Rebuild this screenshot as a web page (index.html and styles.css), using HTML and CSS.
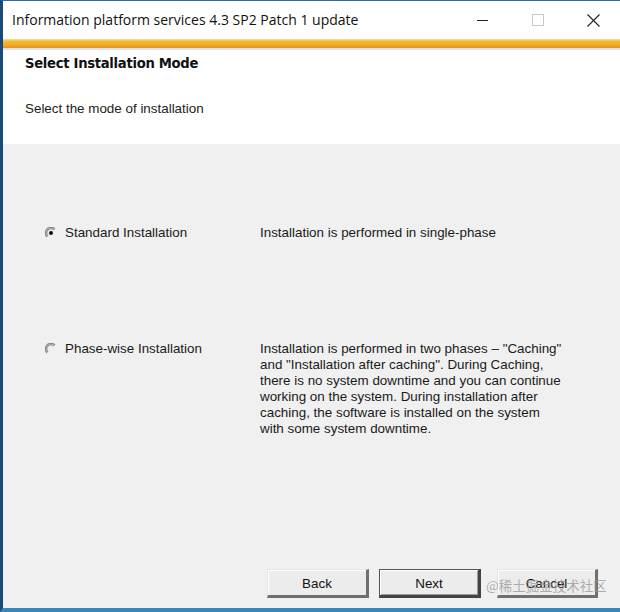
FILE: index.html
```html
<!DOCTYPE html>
<html>
<head>
<meta charset="utf-8">
<link rel="stylesheet" href="styles.css">
</head>
<body>
<div class="window">
  <div class="titlebar">
    <div class="title">Information platform services 4.3 SP2 Patch 1 update</div>
    <div class="controls">
      <span class="ctl ctl-min"><svg width="12" height="12" viewBox="0 0 12 12"><line x1="0" y1="6.5" x2="11" y2="6.5" stroke="#222" stroke-width="1"/></svg></span>
      <span class="ctl ctl-max"><svg width="12" height="12" viewBox="0 0 12 12"><rect x="0.5" y="0.5" width="11" height="11" fill="none" stroke="#c8c8c8" stroke-width="1"/></svg></span>
      <span class="ctl ctl-close"><svg width="13" height="13" viewBox="0 0 13 13"><path d="M0.5 0.5 L12.5 12.5 M12.5 0.5 L0.5 12.5" stroke="#222" stroke-width="1.1" fill="none"/></svg></span>
    </div>
  </div>
  <div class="accent"></div>
  <div class="header">
    <div class="h-title">Select Installation Mode</div>
    <div class="h-sub">Select the mode of installation</div>
  </div>
  <div class="content">
    <div class="options">
      <div class="option">
        <div class="opt-label">
          <span class="radio checked"><svg width="12" height="12" viewBox="0 0 12 12"><path d="M2 10 A5.5 5.5 0 0 1 10 2" stroke="#8a8a8a" stroke-width="1.3" fill="none"/><path d="M3 9 A4 4 0 0 1 9 3" stroke="#555" stroke-width="0.8" fill="none"/><circle cx="6" cy="6" r="2" fill="#111"/></svg></span>
          <span>Standard Installation</span>
        </div>
        <div class="opt-desc">Installation is performed in single-phase</div>
      </div>
      <div class="option">
        <div class="opt-label">
          <span class="radio"><svg width="12" height="12" viewBox="0 0 12 12"><path d="M2 10 A5.5 5.5 0 0 1 10 2" stroke="#8a8a8a" stroke-width="1.3" fill="none"/><path d="M3 9 A4 4 0 0 1 9 3" stroke="#555" stroke-width="0.8" fill="none"/></svg></span>
          <span>Phase-wise Installation</span>
        </div>
        <div class="opt-desc">Installation is performed in two phases – "Caching"<br>and "Installation after caching". During Caching,<br>there is no system downtime and you can continue<br>working on the system. During installation after<br>caching, the software is installed on the system<br>with some system downtime.</div>
      </div>
    </div>
    <div class="buttons">
      <button class="btn">Back</button>
      <button class="btn btn-default">Next</button>
      <button class="btn btn-cancel">Cancel<span class="watermark">@稀土掘金技术社区</span></button>
    </div>
  </div>
</div>
</body>
</html>
```
FILE: styles.css
```css
html, body {
  margin: 0;
  padding: 0;
}
body {
  width: 620px;
  height: 612px;
  overflow: hidden;
  background: #f0f0f0;
  font-family: "Liberation Sans", Arial, sans-serif;
  font-size: 13.4px;
  color: #1a1a1a;
}
.window {
  box-sizing: border-box;
  width: 620px;
  height: 612px;
  border-left: 3px solid #1a4a78;
  border-top: 1px solid #2b6bae;
  border-bottom: 4px solid #3a86b8;
  display: flex;
  flex-direction: column;
}
.titlebar {
  height: 38px;
  background: #ffffff;
  display: flex;
  align-items: center;
  padding-left: 9px;
}
.title {
  flex: 1;
  font-family: "Open Sans", "Noto Sans", sans-serif;
  font-size: 14px;
  color: #111;
  padding-bottom: 1px;
}
.controls {
  display: flex;
  align-items: center;
}
.ctl {
  display: flex;
  align-items: center;
  justify-content: center;
}
.ctl-min {
  width: 12px;
  margin-right: 43px;
}
.ctl-max {
  width: 12px;
  margin-right: 43px;
}
.ctl-close {
  width: 13px;
  margin-right: 20px;
}
.accent {
  height: 9px;
  background: linear-gradient(#fde38a 0%, #f7b93a 25%, #f3a923 70%, #d8962a 100%);
  border-bottom: 2px solid #dde3ea;
}
.header {
  background: #ffffff;
  height: 94px;
  padding-left: 22px;
  box-sizing: border-box;
  padding-top: 6px;
}
.h-title {
  font-family: "DejaVu Sans", sans-serif;
  font-weight: bold;
  font-size: 13.2px;
  letter-spacing: -0.3px;
  color: #111;
  line-height: 16px;
}
.h-sub {
  margin-top: 29px;
  line-height: 16px;
  color: #222;
}
.content {
  flex: 1;
  display: flex;
  flex-direction: column;
  background: #f0f0f0;
}
.options {
  flex: 1;
  padding-top: 81px;
  display: flex;
  flex-direction: column;
  gap: 100px;
}
.option {
  display: flex;
  line-height: 16px;
}
.opt-label {
  width: 215px;
  padding-left: 42px;
  display: flex;
  align-items: flex-start;
  gap: 8px;
  box-sizing: border-box;
}
.radio {
  display: inline-flex;
  width: 12px;
  height: 16px;
  align-items: center;
}
.opt-desc {
  margin-left: 42px;
  color: #1a1a1a;
}
.buttons {
  display: flex;
  padding-left: 264px;
  padding-bottom: 10px;
  gap: 10px;
}
.btn {
  position: relative;
  width: 102px;
  height: 29px;
  box-sizing: border-box;
  background: #ececec;
  border-style: solid;
  border-width: 1px 3px 3px 1px;
  border-color: #e4e4e4 #6f6f6f #6f6f6f #e4e4e4;
  box-shadow: inset 1px 1px 0 #ffffff;
  font-family: "Liberation Sans", Arial, sans-serif;
  font-size: 13.4px;
  color: #111;
  padding: 0;
  padding-top: 1px;
}
.btn-default {
  border-color: #555 #444 #444 #555;
  border-width: 1px 3px 3px 1px;
  box-shadow: inset 1px 1px 0 #ffffff, inset -1px -1px 0 #9a9a9a;
}
.btn-cancel {
  margin-left: 6px;
  width: 101px;
}
.watermark {
  position: absolute;
  left: -12px;
  top: 5px;
  font-family: "Noto Sans CJK SC", sans-serif;
  font-size: 13.5px;
  color: rgba(150, 150, 150, 0.75);
  white-space: nowrap;
  pointer-events: none;
}
```
